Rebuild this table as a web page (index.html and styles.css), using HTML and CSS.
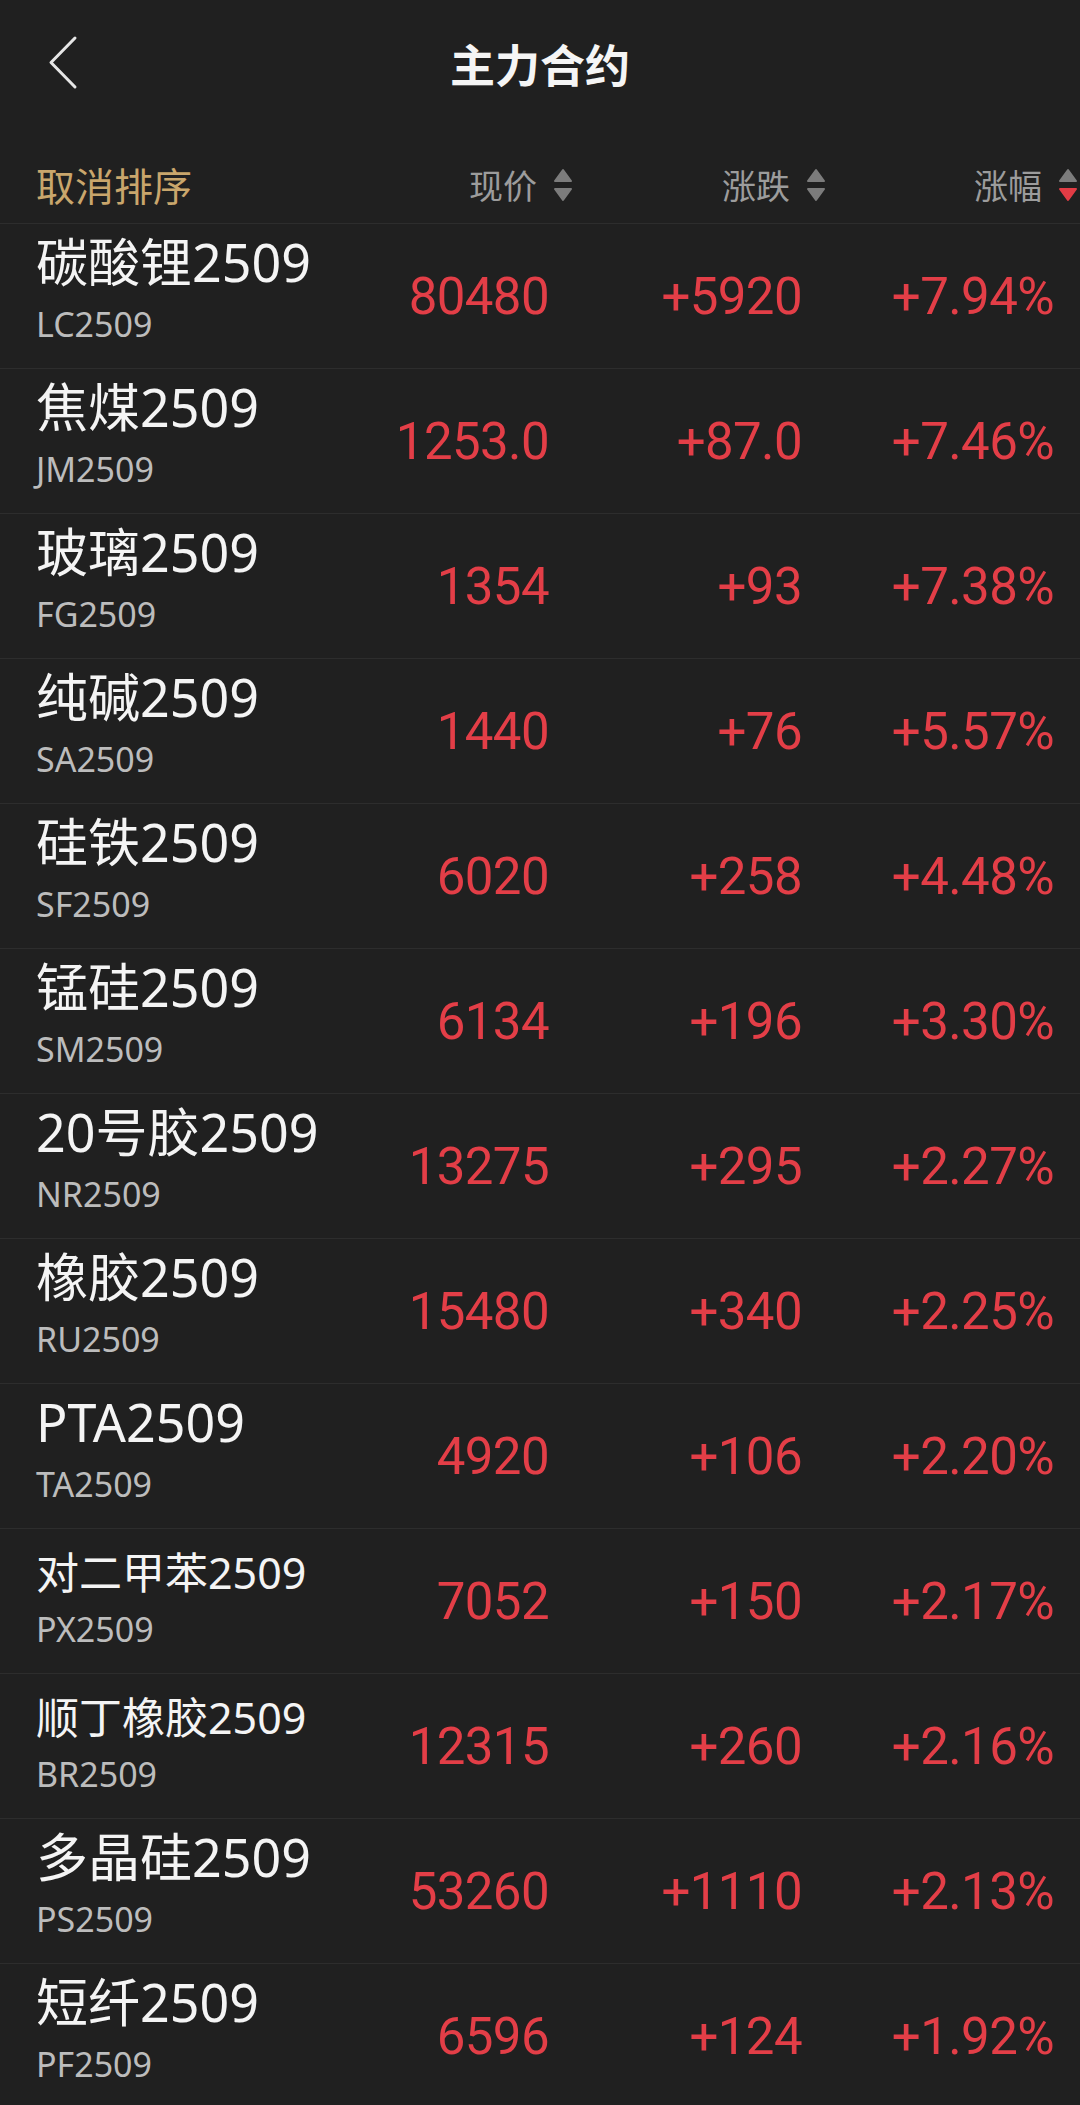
FILE: index.html
```html
<!DOCTYPE html>
<html lang="zh-CN">
<head>
<meta charset="utf-8">
<title>主力合约</title>
<link rel="stylesheet" href="styles.css">
</head>
<body>
<div class="page">
  <header class="topbar">
    <div class="back">
      <svg class="chev" width="40" height="56" viewBox="0 0 40 56"><polyline points="31,3 7,27.5 31,52" fill="none" stroke="#e6e6e6" stroke-width="3" stroke-linecap="round" stroke-linejoin="round"/></svg>
    </div>
    <h1 class="title">主力合约</h1>
    <div></div>
  </header>

  <div class="colhead">
    <div class="cancel">取消排序</div>
    <div class="hcell"><span>现价</span><svg class="sort" width="20" height="35" viewBox="0 0 20 35"><polygon points="10,2 18,13 2,13" fill="#7c7c7c" stroke="#7c7c7c" stroke-width="2" stroke-linejoin="round"/><polygon points="2,21 18,21 10,32" fill="#7c7c7c" stroke="#7c7c7c" stroke-width="2" stroke-linejoin="round"/></svg></div>
    <div class="hcell"><span>涨跌</span><svg class="sort" width="20" height="35" viewBox="0 0 20 35"><polygon points="10,2 18,13 2,13" fill="#7c7c7c" stroke="#7c7c7c" stroke-width="2" stroke-linejoin="round"/><polygon points="2,21 18,21 10,32" fill="#7c7c7c" stroke="#7c7c7c" stroke-width="2" stroke-linejoin="round"/></svg></div>
    <div class="hcell"><span>涨幅</span><svg class="sort" width="20" height="35" viewBox="0 0 20 35"><polygon points="10,2 18,13 2,13" fill="#7c7c7c" stroke="#7c7c7c" stroke-width="2" stroke-linejoin="round"/><polygon points="2,21 18,21 10,32" fill="#e23c45" stroke="#e23c45" stroke-width="2" stroke-linejoin="round"/></svg></div>
  </div>

  <ul class="list">
    <li class="row"><div class="info"><div class="name">碳酸锂2509</div><div class="code">LC2509</div></div><div class="num">80480</div><div class="num">+5920</div><div class="num">+7.94%</div></li>
    <li class="row"><div class="info"><div class="name">焦煤2509</div><div class="code">JM2509</div></div><div class="num">1253.0</div><div class="num">+87.0</div><div class="num">+7.46%</div></li>
    <li class="row"><div class="info"><div class="name">玻璃2509</div><div class="code">FG2509</div></div><div class="num">1354</div><div class="num">+93</div><div class="num">+7.38%</div></li>
    <li class="row"><div class="info"><div class="name">纯碱2509</div><div class="code">SA2509</div></div><div class="num">1440</div><div class="num">+76</div><div class="num">+5.57%</div></li>
    <li class="row"><div class="info"><div class="name">硅铁2509</div><div class="code">SF2509</div></div><div class="num">6020</div><div class="num">+258</div><div class="num">+4.48%</div></li>
    <li class="row"><div class="info"><div class="name">锰硅2509</div><div class="code">SM2509</div></div><div class="num">6134</div><div class="num">+196</div><div class="num">+3.30%</div></li>
    <li class="row"><div class="info"><div class="name">20号胶2509</div><div class="code">NR2509</div></div><div class="num">13275</div><div class="num">+295</div><div class="num">+2.27%</div></li>
    <li class="row"><div class="info"><div class="name">橡胶2509</div><div class="code">RU2509</div></div><div class="num">15480</div><div class="num">+340</div><div class="num">+2.25%</div></li>
    <li class="row"><div class="info"><div class="name">PTA2509</div><div class="code">TA2509</div></div><div class="num">4920</div><div class="num">+106</div><div class="num">+2.20%</div></li>
    <li class="row"><div class="info"><div class="name name-sm">对二甲苯2509</div><div class="code">PX2509</div></div><div class="num">7052</div><div class="num">+150</div><div class="num">+2.17%</div></li>
    <li class="row"><div class="info"><div class="name name-sm">顺丁橡胶2509</div><div class="code">BR2509</div></div><div class="num">12315</div><div class="num">+260</div><div class="num">+2.16%</div></li>
    <li class="row"><div class="info"><div class="name">多晶硅2509</div><div class="code">PS2509</div></div><div class="num">53260</div><div class="num">+1110</div><div class="num">+2.13%</div></li>
    <li class="row"><div class="info"><div class="name">短纤2509</div><div class="code">PF2509</div></div><div class="num">6596</div><div class="num">+124</div><div class="num">+1.92%</div></li>
  </ul>
</div>
</body>
</html>
```

FILE: styles.css
```css
* { box-sizing: border-box; }

html, body {
  margin: 0;
  padding: 0;
  background: #202020;
}

body {
  font-family: "Noto Sans", "Noto Sans CJK SC", sans-serif;
  color: #f2f2f2;
  overflow: hidden;
}

.page {
  width: 1080px;
  height: 2105px;
  overflow: hidden;
  background: #202020;
}

.topbar {
  height: 126px;
  display: grid;
  grid-template-columns: 1fr auto 1fr;
  align-items: center;
}

.back {
  padding-left: 44px;
  display: flex;
  align-items: center;
}

.chev { display: block; }

.title {
  margin: 0;
  font-family: "Noto Sans CJK SC", sans-serif;
  font-size: 45px;
  font-weight: 700;
  color: #f5f5f5;
  line-height: 1;
}

.colhead {
  height: 98px;
  display: grid;
  grid-template-columns: 1fr 200px 253px 252px;
  padding: 0 26px 20px 36px;
  align-items: end;
  border-bottom: 1px solid #2d2d2d;
}

.cancel {
  font-family: "Noto Sans CJK SC", sans-serif;
  font-size: 39px;
  line-height: 36px;
  color: #c9a66c;
  padding-bottom: 1px;
}

.hcell {
  display: flex;
  justify-content: flex-end;
  align-items: center;
  gap: 16px;
  margin-right: -24px;
  font-family: "Noto Sans CJK SC", sans-serif;
  font-size: 34px;
  line-height: 36px;
  color: #9c9c9c;
}

.sort { display: block; flex: none; }

.list {
  list-style: none;
  margin: 0;
  padding: 0;
}

.row {
  height: 145px;
  display: grid;
  grid-template-columns: 1fr 200px 253px 252px;
  padding: 0 26px 0 36px;
  align-items: center;
  border-bottom: 1px solid #2d2d2d;
}

.info {
  align-self: start;
  padding-top: 10px;
}

.name {
  font-size: 52px;
  line-height: 56px;
  height: 56px;
  color: #f4f4f4;
  white-space: nowrap;
}

.name-sm {
  font-size: 43px;
  line-height: 45px;
  padding-top: 11px;
}

.code {
  margin-top: 14px;
  font-size: 34px;
  line-height: 40px;
  color: #bcbcbc;
  white-space: nowrap;
}

.num {
  text-align: right;
  font-family: "Roboto", "Noto Sans", sans-serif;
  font-size: 51px;
  line-height: 1;
  letter-spacing: -0.6px;
  color: #e33e47;
  white-space: nowrap;
}
```
